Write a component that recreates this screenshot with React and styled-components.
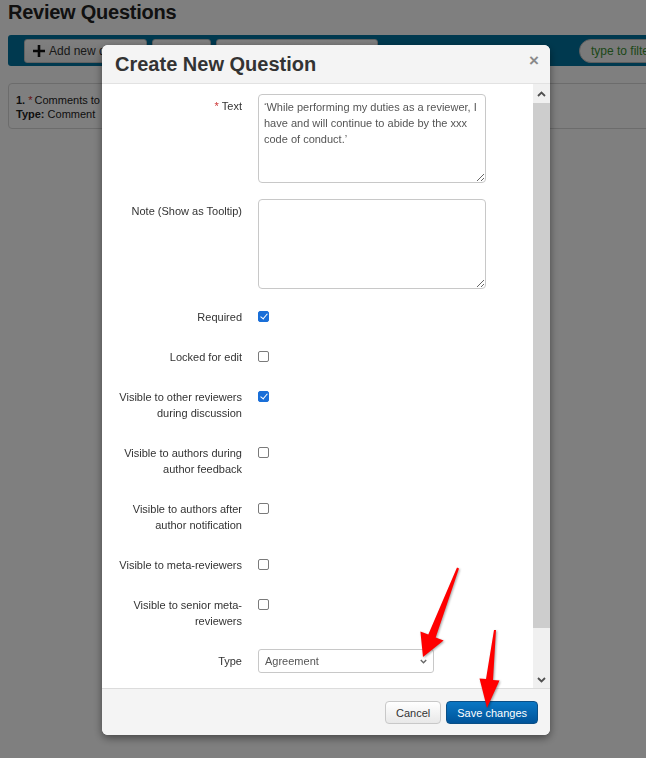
import React from 'react';
import styled, { createGlobalStyle } from 'styled-components';

const GlobalStyle = createGlobalStyle`
  html, body {
    margin: 0;
    padding: 0;
    width: 646px;
    height: 758px;
    overflow: hidden;
    background: #ffffff;
  }
  body {
    font-family: "Liberation Sans", Arial, Helvetica, sans-serif;
    color: #333333;
  }
`;

const Page = styled.div`
  width: 744px;
  padding: 0 8px;
`;

const PageTitle = styled.h1`
  margin: 0;
  padding-top: 1px;
  font-size: 20px;
  line-height: 22px;
  font-weight: 700;
  letter-spacing: -0.25px;
  color: #222222;
`;

const Toolbar = styled.div`
  display: flex;
  align-items: center;
  gap: 5px;
  height: 31px;
  margin-top: 12px;
  padding: 0 12px 0 16px;
  background: #00739f;
  border-radius: 3px;
`;

const ToolButton = styled.button`
  display: flex;
  align-items: center;
  gap: 4px;
  width: ${(p) => p.$w}px;
  height: 24px;
  padding: 0 8px;
  border: 1px solid #c4c4c4;
  border-radius: 3px;
  background: linear-gradient(#ffffff, #ececec);
  font: 12px "Liberation Sans", Arial, sans-serif;
  color: #333333;
  white-space: nowrap;
  overflow: hidden;

  svg {
    flex-shrink: 0;
  }
`;

const Filter = styled.div`
  margin-left: auto;
  width: 137px;
  height: 22px;
  padding: 0 11px;
  border: 1px solid #bdbdbd;
  border-radius: 12px;
  background: #f4f4f4;
  font-size: 12px;
  line-height: 22px;
  color: #3a9032;
`;

const Card = styled.div`
  margin-top: 17px;
  padding: 9px 7px 7px;
  border: 1px solid #d8d8d8;
  border-radius: 4px;
  font-size: 11px;
  line-height: 14px;
  color: #222222;
  b { font-weight: 700; }
`;

const Star = styled.span`
  color: #d21f1f;
  margin-right: 2px;
`;

const Overlay = styled.div`
  position: fixed;
  inset: 0;
  background: rgba(0, 0, 0, 0.5);
`;

const Modal = styled.div`
  position: fixed;
  top: 45px;
  left: 102px;
  width: 448px;
  display: flex;
  flex-direction: column;
  background: #ffffff;
  border-radius: 6px;
  box-shadow: 0 3px 9px rgba(0, 0, 0, 0.45);
  overflow: hidden;
`;

const Header = styled.div`
  display: flex;
  align-items: center;
  justify-content: space-between;
  height: 38px;
  padding: 0 11px 0 13px;
  background: #f4f4f4;
  border-bottom: 1px solid #e2e2e2;
`;

const Title = styled.h3`
  margin: 0;
  font-size: 20px;
  font-weight: 700;
  color: #333333;
`;

const Close = styled.span`
  font-size: 17px;
  font-weight: 700;
  color: #8a8a8a;
  line-height: 1;
  margin-top: -7px;
`;

const Body = styled.div`
  display: flex;
  height: 604px;
`;

const Content = styled.div`
  flex: 1;
  overflow: hidden;
  padding: 10px 0 0 13px;
`;

const ScrollBar = styled.div`
  width: 17px;
  display: flex;
  flex-direction: column;
  background: #f0f0f0;
`;

const ScrollArrow = styled.div`
  height: ${(p) => p.$h}px;
  display: flex;
  align-items: center;
  justify-content: center;
`;

const Thumb = styled.div`
  height: 525px;
  background: #cdcdcd;
`;

const ScrollGap = styled.div`
  flex: 1;
`;

const Row = styled.div`
  display: flex;
  align-items: flex-start;
  margin-bottom: 16px;
`;

const Label = styled.label`
  width: 127px;
  margin-right: 16px;
  padding: 4px 0;
  text-align: right;
  font-size: 11px;
  line-height: 16px;
  color: #333333;
`;

const Required = styled.span`
  color: #cc3333;
  margin-right: 3px;
`;

const TextArea = styled.textarea`
  box-sizing: border-box;
  width: 228px;
  height: ${(p) => p.$h}px;
  margin: 0;
  padding: 4px 5px;
  border: 1px solid #c8c8c8;
  border-radius: 4px;
  font: 11px/16px "Liberation Sans", Arial, sans-serif;
  color: #555555;
  outline: none;
`;

const Check = styled.input.attrs({ type: 'checkbox', readOnly: true })`
  appearance: none;
  position: relative;
  box-sizing: border-box;
  width: 11px;
  height: 11px;
  margin: 6px 0 0;
  border: 1px solid #7a7a7a;
  border-radius: 2px;
  background: #ffffff;

  &:checked {
    border-color: #1a6fd8;
    background: #1a6fd8;
  }
  &:checked::after {
    content: '';
    position: absolute;
    left: 3px;
    top: 0px;
    width: 3px;
    height: 6px;
    border: solid #ffffff;
    border-width: 0 1.5px 1.5px 0;
    transform: rotate(40deg);
  }
`;

const Select = styled.div`
  box-sizing: border-box;
  display: flex;
  align-items: center;
  justify-content: space-between;
  width: 176px;
  height: 24px;
  padding: 0 6px 0 6px;
  border: 1px solid #c8c8c8;
  border-radius: 3px;
  font-size: 11px;
  color: #555555;
`;

const Footer = styled.div`
  display: flex;
  justify-content: flex-end;
  gap: 5px;
  height: 47px;
  padding: 12px 12px 0;
  box-sizing: border-box;
  background: #f4f4f4;
  border-top: 1px solid #dcdcdc;
`;

const Button = styled.button`
  height: 23px;
  padding: 0 10px;
  border-radius: 4px;
  font: 11px "Liberation Sans", Arial, sans-serif;
  border: 1px solid ${(p) => (p.$primary ? '#0a4f86' : '#c8c8c8')};
  color: ${(p) => (p.$primary ? '#ffffff' : '#333333')};
  background: ${(p) =>
    p.$primary
      ? 'linear-gradient(#0a77c4, #00549a)'
      : 'linear-gradient(#ffffff, #e8e8e8)'};
`;

const Annotations = styled.svg`
  position: fixed;
  inset: 0;
  width: 646px;
  height: 758px;
  pointer-events: none;
  filter: drop-shadow(1px 1px 1px rgba(0, 0, 0, 0.35));
`;

const Chevron = ({ up, color = '#505050', w = 9, h = 6 }) => (
  <svg width={w} height={h} viewBox="0 0 9 6">
    <polyline
      points={up ? '1,5 4.5,1.5 8,5' : '1,1 4.5,4.5 8,1'}
      fill="none"
      stroke={color}
      strokeWidth="1.8"
    />
  </svg>
);

const checks = [
  { label: 'Required', on: true },
  { label: 'Locked for edit', on: false },
  { label: 'Visible to other reviewers during discussion', on: true },
  { label: 'Visible to authors during author feedback', on: false },
  { label: 'Visible to authors after author notification', on: false },
  { label: 'Visible to meta-reviewers', on: false },
  { label: 'Visible to senior meta-reviewers', on: false },
];

export default function App() {
  return (
    <>
      <GlobalStyle />
      <Page>
        <PageTitle>Review Questions</PageTitle>
        <Toolbar>
          <ToolButton $w={123}>
            <svg width="12" height="12" viewBox="0 0 12 12">
              <path d="M6 0v12M0 6h12" stroke="#111" strokeWidth="2.6" />
            </svg>
            Add new question
          </ToolButton>
          <ToolButton $w={59} />
          <ToolButton $w={162} />
          <Filter>type to filter</Filter>
        </Toolbar>
        <Card>
          <div>
            <b>1.</b> <Star>*</Star>Comments to authors
          </div>
          <div>
            <b>Type:</b> Comment
          </div>
        </Card>
      </Page>

      <Overlay />

      <Modal>
        <Header>
          <Title>Create New Question</Title>
          <Close>×</Close>
        </Header>
        <Body>
          <Content>
            <Row>
              <Label>
                <Required>*</Required>Text
              </Label>
              <TextArea
                $h={89}
                readOnly
                defaultValue="‘While performing my duties as a reviewer, I have and will continue to abide by the xxx code of conduct.’"
              />
            </Row>
            <Row>
              <Label>Note (Show as Tooltip)</Label>
              <TextArea $h={90} readOnly defaultValue="" />
            </Row>
            {checks.map((c) => (
              <Row key={c.label}>
                <Label>{c.label}</Label>
                <Check defaultChecked={c.on} />
              </Row>
            ))}
            <Row>
              <Label>Type</Label>
              <Select>
                <span>Agreement</span>
                <Chevron color="#666" w={7} h={5} />
              </Select>
            </Row>
          </Content>
          <ScrollBar>
            <ScrollArrow $h={19}>
              <Chevron up />
            </ScrollArrow>
            <Thumb />
            <ScrollGap />
            <ScrollArrow $h={17}>
              <Chevron />
            </ScrollArrow>
          </ScrollBar>
        </Body>
        <Footer>
          <Button>Cancel</Button>
          <Button $primary>Save changes</Button>
        </Footer>
      </Modal>

      <Annotations viewBox="0 0 646 758">
        <polygon
          fill="#ff0000"
          points="457,567.6 428.3,634.5 420.4,631.4 423,657 443.6,640.6 435.7,637.5 459,568.4"
        />
        <polygon
          fill="#ff0000"
          points="494,629.9 486,679.1 479.5,678.5 487,708 499.5,680.5 493,679.9 496,630.1"
        />
      </Annotations>
    </>
  );
}
